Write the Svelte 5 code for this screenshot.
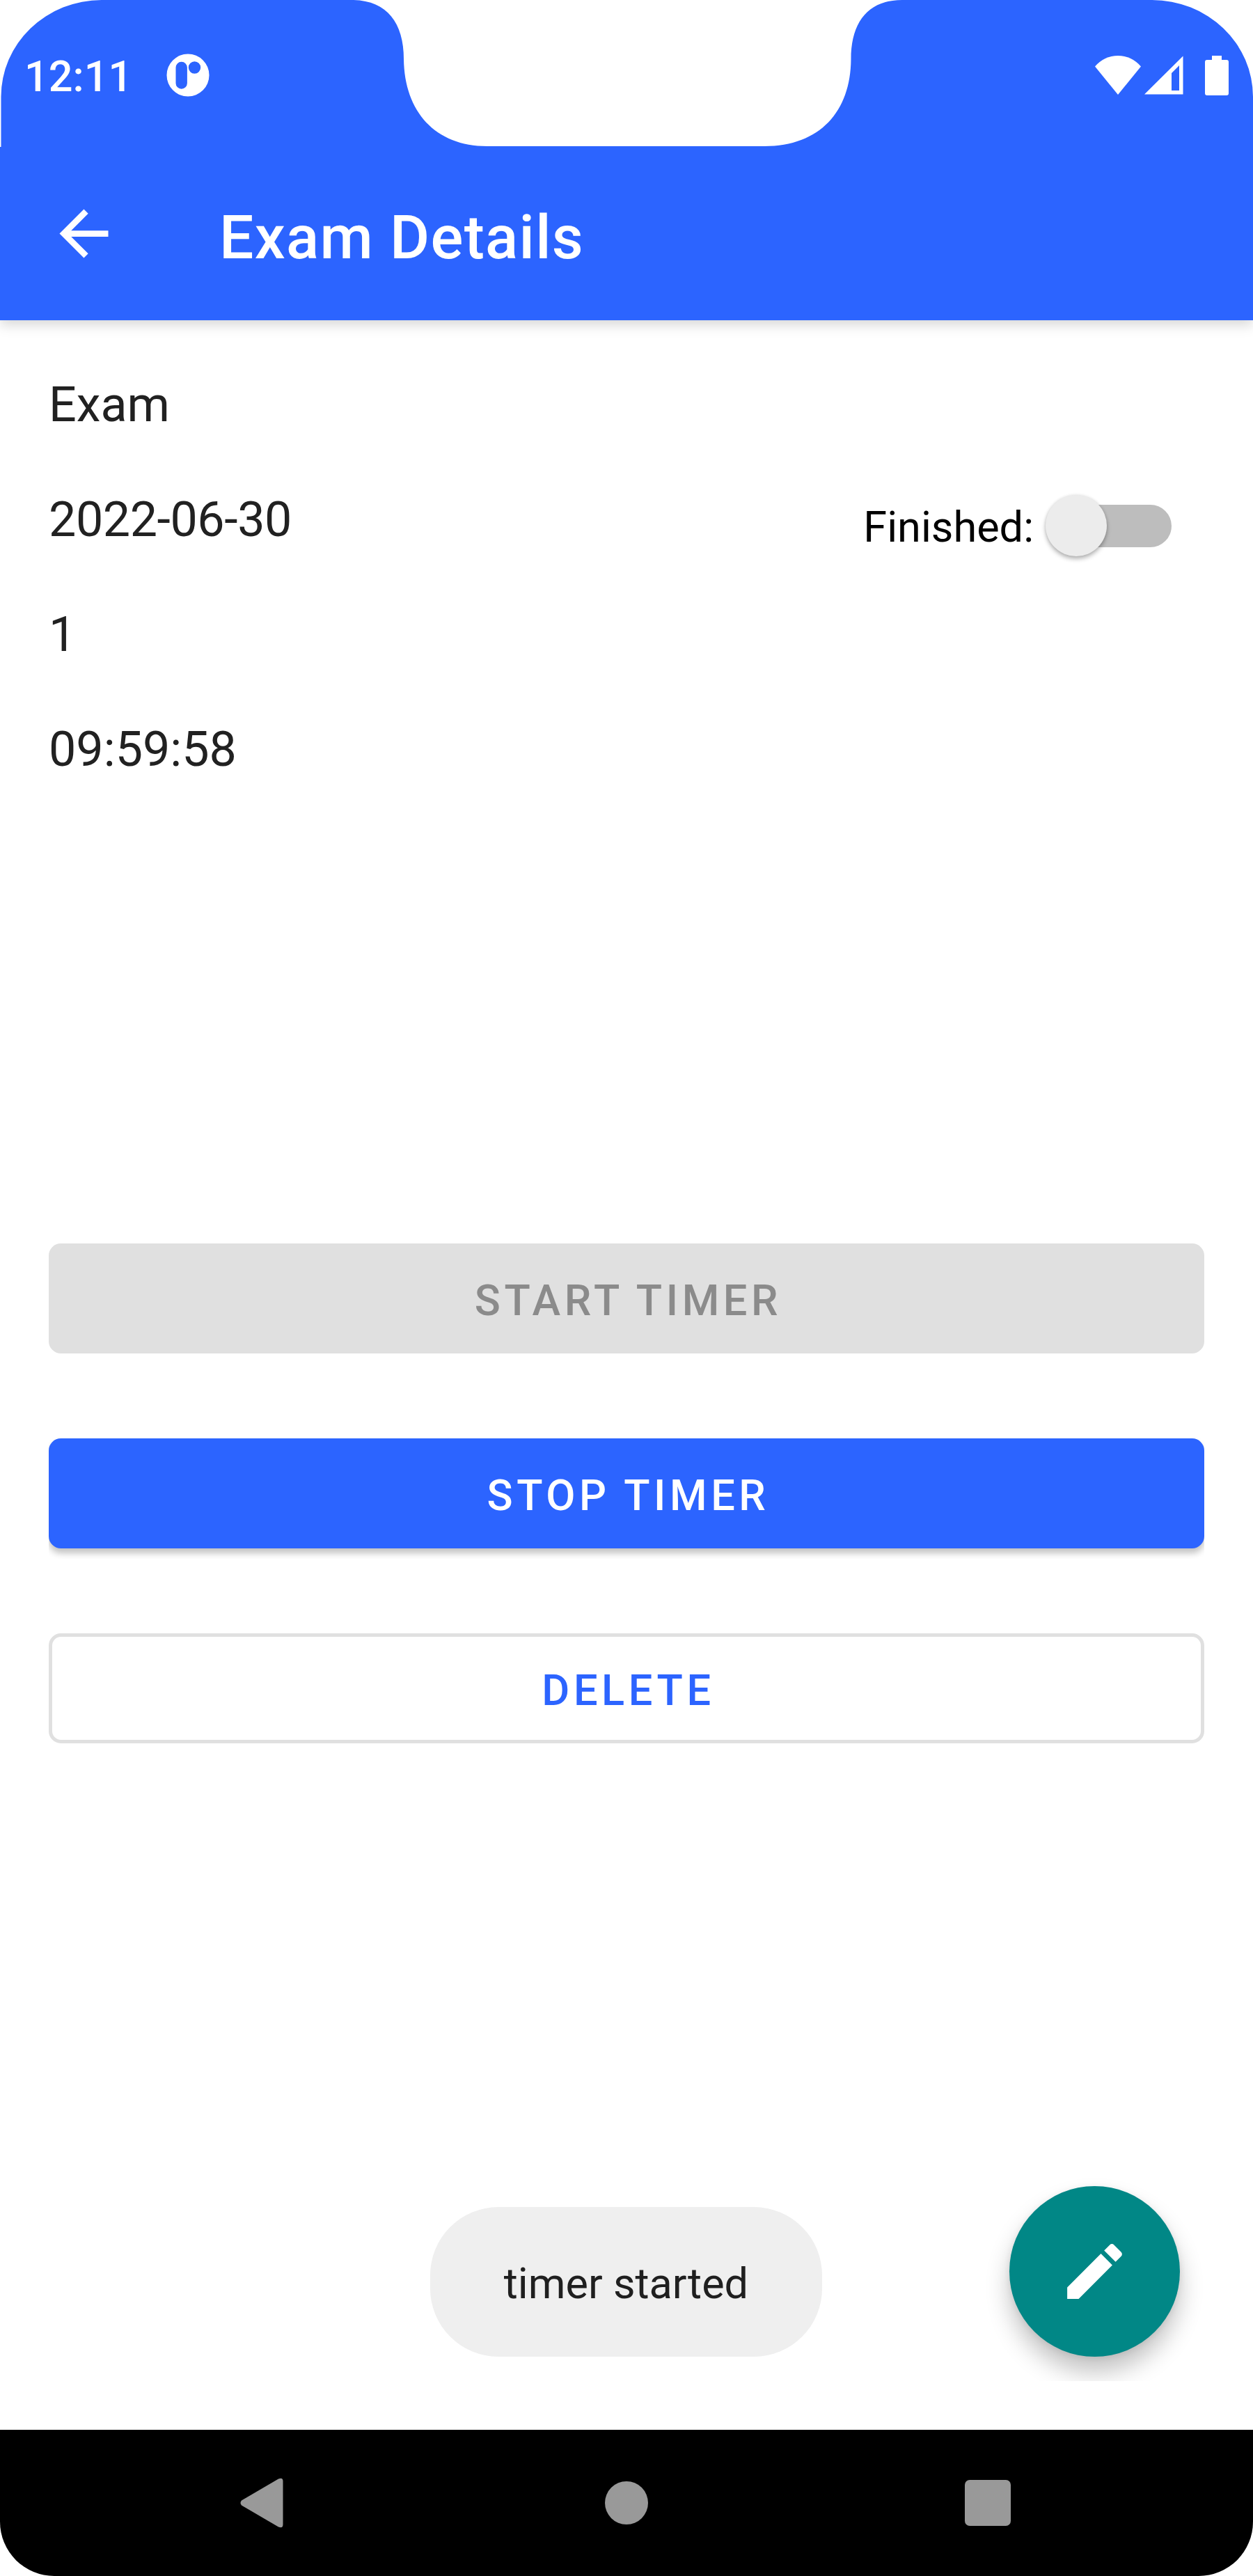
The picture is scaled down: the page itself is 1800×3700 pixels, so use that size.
<script>
  const details = [
    { text: 'Exam' },
    { text: '2022-06-30', date: true },
    { text: '1' },
    { text: '09:59:58' }
  ];
  let finished = $state(false);
</script>

<div class="screen">
  <header>
    <div class="status">
      <span class="clock">12:11</span>
      <svg class="app-icon" width="62" height="62" viewBox="0 0 62 62">
        <path
          fill="#fff"
          fill-rule="evenodd"
          d="M31 .5a30.5 30.5 0 1 1 0 61a30.5 30.5 0 1 1 0-61zM13.5 20v22.5a8.2 8.2 0 0 0 16.4 0V20a8.2 8.2 0 0 0-16.4 0zM40.5 11.3a8.7 8.7 0 1 0 0 17.4a8.7 8.7 0 1 0 0-17.4z"
        />
      </svg>
      <span class="spacer"></span>
      <svg class="wifi" width="66" height="56" viewBox="0 0 66 56">
        <path fill="#fff" d="M0 15.5A43 43 0 0 1 66 15.5L33 56z" />
      </svg>
      <svg class="signal" width="56" height="56" viewBox="0 0 56 56">
        <path fill="#fff" fill-rule="evenodd" d="M0 55.5L55.5 .5V55.5zM39 25V50H50V14z" />
      </svg>
      <svg class="battery" width="34" height="57" viewBox="0 0 34 57">
        <path
          fill="#fff"
          d="M10 0H24V6H31a3 3 0 0 1 3 3V54a3 3 0 0 1-3 3H3a3 3 0 0 1-3-3V9a3 3 0 0 1 3-3H10z"
        />
      </svg>
    </div>
    <div class="app-bar">
      <svg width="105" height="105" viewBox="0 0 24 24">
        <path fill="#fff" d="M20 11H7.83l5.59-5.59L12 4l-8 8 8 8 1.41-1.41L7.83 13H20v-2z" />
      </svg>
      <h1>Exam Details</h1>
    </div>
    <!-- Rounded display corners and the camera notch -->
    <svg class="cutouts" width="1800" height="211" viewBox="0 0 1800 211">
      <path fill="#fff" d="M0 0H146A144.5 139 0 0 0 1.5 139V211H0z" />
      <path fill="#fff" d="M1800 0H1655A145 139 0 0 1 1800 139z" />
      <path
        fill="#fff"
        d="M505 0C555 0 580 32 580 85C581 160 625 210 700 210H1098C1178 210 1222 160 1222.5 85C1222.5 32 1247 0 1296 0z"
      />
    </svg>
  </header>

  <main>
    <section class="details">
      <ul>
        {#each details as line}
          <li class:date={line.date}>{line.text}</li>
        {/each}
      </ul>
      <button
        class="switch"
        class:on={finished}
        role="switch"
        aria-checked={finished}
        onclick={() => (finished = !finished)}
      >
        <span class="label">Finished:</span>
        <span class="track"><span class="thumb"></span></span>
      </button>
    </section>

    <section class="actions">
      <button class="btn disabled" disabled>START TIMER</button>
      <button class="btn primary">STOP TIMER</button>
      <button class="btn outlined">DELETE</button>
    </section>
  </main>

  <div class="toast">timer started</div>

  <button class="fab" aria-label="Edit">
    <svg width="105" height="105" viewBox="0 0 24 24">
      <path
        fill="#fff"
        d="M3 17.25V21h3.75L17.81 9.94l-3.75-3.75L3 17.25zM20.71 7.04c.39-.39.39-1.02 0-1.41l-2.34-2.34c-.39-.39-1.02-.39-1.41 0l-1.83 1.83 3.75 3.75 1.83-1.83z"
      />
    </svg>
  </button>

  <nav>
    <svg width="62" height="72" viewBox="0 0 62 72">
      <path
        fill="#999"
        d="M2 32.5L55 1.6Q61.5 -1 61.5 5V67Q61.5 73 55 70.4L2 39.5Q-1 36 2 32.5z"
      />
    </svg>
    <svg class="home" width="62" height="62" viewBox="0 0 62 62">
      <circle cx="31" cy="31" r="31" fill="#999" />
    </svg>
    <svg width="66" height="66" viewBox="0 0 66 66">
      <rect width="66" height="66" rx="7" fill="#999" />
    </svg>
  </nav>
</div>

<style>
  :global(body) {
    margin: 0;
    background: #fff;
  }

  .screen {
    position: relative;
    display: flex;
    flex-direction: column;
    width: 1800px;
    height: 3700px;
    overflow: hidden;
    background: #fff;
    font-family: Roboto, 'Liberation Sans', sans-serif;
  }

  button {
    padding: 0;
    border: 0;
    background: none;
    font-family: inherit;
  }

  svg {
    display: block;
    flex: none;
  }

  header {
    position: relative;
    height: 460px;
    flex: none;
    background: #2c64ff;
    color: #fff;
    box-shadow: 0 6px 18px rgba(0, 0, 0, 0.17);
  }

  .cutouts {
    position: absolute;
    inset: 0 auto auto 0;
  }

  .status {
    display: flex;
    align-items: center;
    box-sizing: border-box;
    height: 216px;
    padding: 0 35px 0 35px;
  }

  .clock {
    width: 204px;
    padding-top: 4px;
    font-size: 61.25px;
    font-weight: 500;
    line-height: 72px;
  }

  .spacer {
    flex: 1;
  }

  .signal {
    margin-left: 5px;
  }

  .battery {
    margin-left: 31px;
  }

  .app-bar {
    display: flex;
    align-items: center;
    gap: 142.5px;
    box-sizing: border-box;
    height: 244px;
    padding: 0 67.5px 5px;
  }

  h1 {
    margin: 0;
    padding-top: 11px;
    font-size: 87.5px;
    font-weight: 500;
    line-height: 104px;
    letter-spacing: 1.3px;
    white-space: nowrap;
  }

  main {
    display: flex;
    flex-direction: column;
    gap: 627px;
    padding: 39px 70px 0;
  }

  .details {
    display: flex;
    justify-content: space-between;
    align-items: flex-start;
  }

  ul {
    margin: 0;
    padding: 0;
    list-style: none;
    color: #212121;
    font-size: 70px;
    line-height: 165px;
  }

  .date {
    letter-spacing: -0.45px;
  }

  .switch {
    display: flex;
    align-items: center;
    gap: 15px;
    height: 88px;
    margin: 212px 47px 0 0;
    color: #000;
  }

  .label {
    padding-top: 3px;
    font-size: 61.25px;
    line-height: 72px;
  }

  .track {
    display: flex;
    align-items: center;
    width: 176px;
    height: 61px;
    margin-left: 7px;
    border-radius: 31px;
    background: #bdbdbd;
  }

  .thumb {
    width: 88px;
    height: 88px;
    flex: none;
    margin-left: -5px;
    border-radius: 50%;
    background: #ececec;
    box-shadow: 0 4px 6px rgba(0, 0, 0, 0.28), 0 0 4px rgba(0, 0, 0, 0.1);
  }

  .on .thumb {
    margin-left: 93px;
  }

  .actions {
    display: flex;
    flex-direction: column;
    gap: 122px;
  }

  .btn {
    box-sizing: border-box;
    height: 158px;
    padding: 6px 0 0 5px;
    border-radius: 17.5px;
    font-size: 61.25px;
    font-weight: 500;
    line-height: 72px;
    letter-spacing: 5.6px;
    text-align: center;
  }

  .disabled {
    background: #e0e0e0;
    color: #8b8b8b;
  }

  /* The elevation shadow shows above and below the button only. */
  .primary {
    background: #2c64ff;
    color: #fff;
    box-shadow: 0 7px 10px rgba(0, 0, 0, 0.24);
    clip-path: inset(-20px 0 -30px 0);
  }

  .outlined {
    border: 5px solid #e0e0e0;
    color: #2c64ff;
  }

  .toast {
    position: absolute;
    top: 3170px;
    left: 618px;
    box-sizing: border-box;
    width: 563px;
    height: 215px;
    padding-top: 74px;
    border-radius: 98px;
    background: #efefef;
    color: #1f1f1f;
    font-size: 61.25px;
    line-height: 72px;
    text-align: center;
  }

  .fab {
    position: absolute;
    top: 3140px;
    left: 1450px;
    display: flex;
    align-items: center;
    justify-content: center;
    width: 245px;
    height: 245px;
    border-radius: 50%;
    background: #018786;
    box-shadow: 0 22px 34px rgba(0, 0, 0, 0.24), 0 2px 10px rgba(0, 0, 0, 0.08);
    clip-path: inset(-40px -34px -35px -40px);
  }

  nav {
    display: flex;
    align-items: center;
    justify-content: space-between;
    box-sizing: border-box;
    height: 210px;
    margin-top: auto;
    padding: 0 348px 0 344.5px;
    border-radius: 0 0 78px 78px;
    background: #000;
  }

  .home {
    margin-left: 8px;
  }
</style>
